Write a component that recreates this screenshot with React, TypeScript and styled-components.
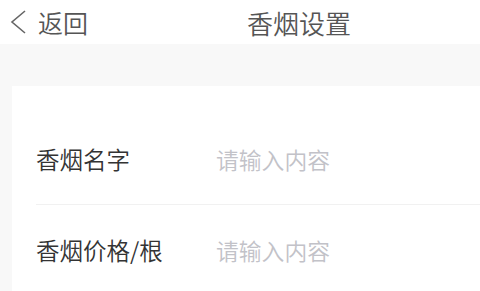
import React from "react";
import styled, { createGlobalStyle } from "styled-components";

const GlobalStyle = createGlobalStyle`
  html, body {
    margin: 0;
    padding: 0;
    background: #f8f8f8;
    font-family: "Noto Sans CJK SC", "Noto Sans", sans-serif;
  }
`;

const Page = styled.div`
  width: 480px;
  height: 291px;
  overflow: hidden;
  background: #f8f8f8;
`;

const Header = styled.div`
  height: 44px;
  background: #fff;
  display: grid;
  grid-template-columns: 120px 1fr 120px;
  align-items: center;
`;

const BackButton = styled.div`
  display: flex;
  align-items: center;
  gap: 11px;
  padding-left: 9px;
  color: #555;
  font-size: 25px;
  font-weight: 350;
`;

const Title = styled.div`
  text-align: center;
  font-size: 26px;
  font-weight: 350;
  color: #555;
  padding-left: 118px;
  white-space: nowrap;
`;

const Card = styled.div`
  margin: 42px 0 0 12px;
  background: #fff;
  padding-top: 28px;
`;

const Row = styled.div<{ $divider?: boolean }>`
  height: 90px;
  margin-left: 24px;
  display: flex;
  align-items: center;
  border-bottom: ${(p) => (p.$divider ? "1px solid #f1f1f1" : "none")};
`;

const Label = styled.div`
  width: 180px;
  font-size: 23.5px;
  font-weight: 350;
  color: #333;
`;

const Input = styled.input`
  border: none;
  outline: none;
  background: transparent;
  font-family: inherit;
  font-size: 22.8px;
  font-weight: 350;
  color: #333;
  padding: 0;
  flex: 1;
  &::placeholder {
    color: #c2c2c8;
  }
`;

const App: React.FC = () => {
  return (
    <Page>
      <GlobalStyle />
      <Header>
        <BackButton>
          <svg width="18" height="26" viewBox="0 0 18 26" fill="none">
            <path d="M16 2 L3 13 L16 24" stroke="#666" strokeWidth="1.6" />
          </svg>
          <span>返回</span>
        </BackButton>
        <Title>香烟设置</Title>
        <div />
      </Header>
      <Card>
        <Row $divider>
          <Label>香烟名字</Label>
          <Input placeholder="请输入内容" />
        </Row>
        <Row>
          <Label>香烟价格/根</Label>
          <Input placeholder="请输入内容" />
        </Row>
      </Card>
    </Page>
  );
};

export default App;
